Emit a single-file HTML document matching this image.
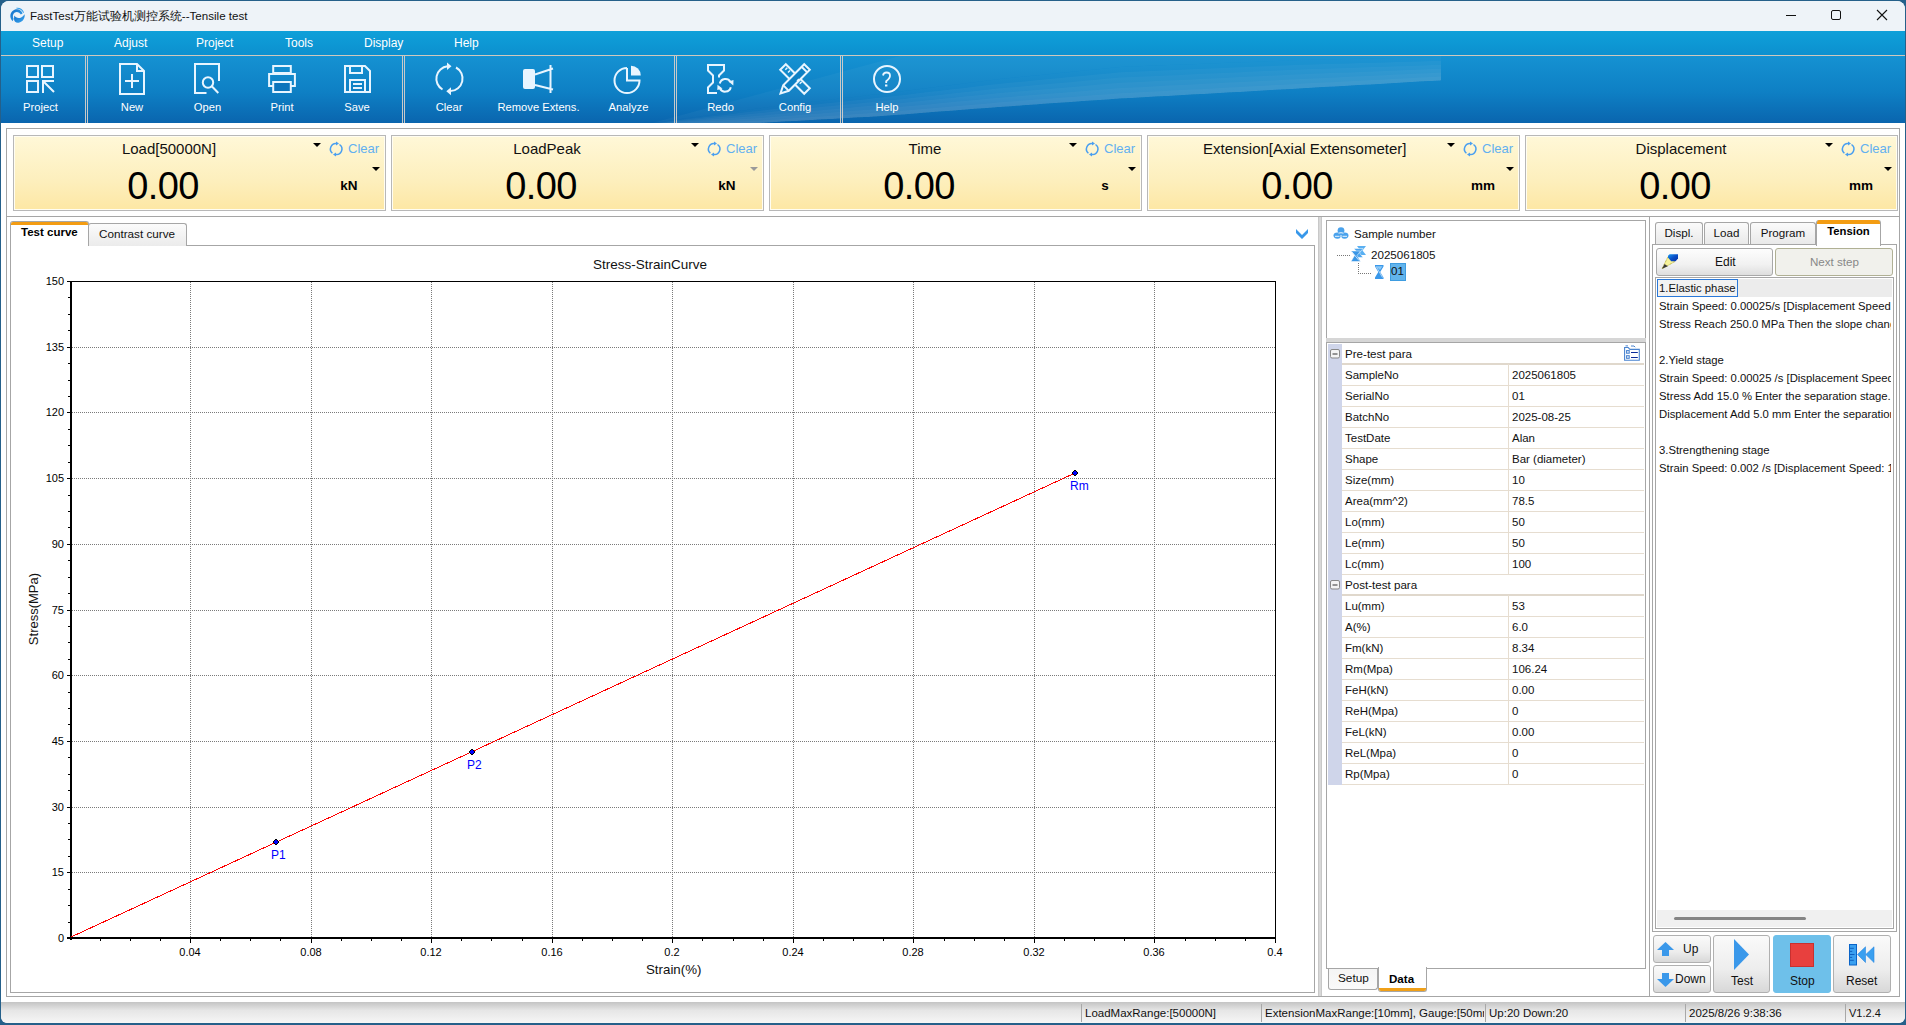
<!DOCTYPE html><html><head><meta charset="utf-8"><style>
*{margin:0;padding:0;box-sizing:border-box}
html,body{width:1906px;height:1025px;overflow:hidden;background:#fff;font-family:"Liberation Sans",sans-serif;color:#000}
.a{position:absolute}
.t{position:absolute;white-space:nowrap;line-height:1}
svg{position:absolute;overflow:visible}
</style></head><body>
<div class="a" style="left:0px;top:0px;width:1906px;height:1025px;background:#25608a"></div>
<div class="a" style="left:1px;top:1px;width:1904px;height:1022px;background:#fff;border-radius:8px 8px 7px 7px"></div>
<div class="a" style="left:1px;top:1px;width:1904px;height:30px;background:#eef3f8;border-radius:8px 8px 0 0"></div>
<svg style="left:8px;top:6px" width="18" height="18" viewBox="0 0 18 18">
<defs><linearGradient id="lg" x1="0" y1="0" x2="1" y2="1"><stop offset="0" stop-color="#1270c8"/><stop offset="1" stop-color="#3aa6f0"/></linearGradient></defs>
<path d="M4.6 15.2 C1.2 12 1.5 6 6.5 3.8 C10 2.4 13.5 4 14.6 7.6 L12.8 8.6 C11.5 6.2 9 5.3 6.8 6.5 C4.8 7.6 4.3 10.5 5.6 13 Z" fill="url(#lg)"/>
<path d="M6.3 9.6 C7.5 11.8 10.8 12.6 13.2 11.4 C14.8 10.6 15.8 9.4 16.6 8.3 C17.2 12 15 16 10.6 16.8 C8 17.2 6.2 15.8 6 13 Z" fill="url(#lg)"/>
<path d="M8.2 1.8 C11.8 1.2 15 3 16 6.5 L15.2 6.9 C14 4.2 11.5 2.8 8.5 2.6 Z" fill="#3aa0ea"/>
</svg>
<div class="t" style="left:30px;top:10px;font-size:11.6px;color:#111;font-weight:normal;">FastTest万能试验机测控系统--Tensile test</div>
<div class="a" style="left:1786px;top:15px;width:10px;height:1px;background:#111"></div>
<div class="a" style="left:1831px;top:10px;width:10px;height:10px;border:1px solid #111;border-radius:2px"></div>
<svg style="left:1877px;top:10px" width="10" height="10"><path d="M0 0L10 10M10 0L0 10" stroke="#111" stroke-width="1.1"/></svg>
<div class="a" style="left:1px;top:31px;width:1904px;height:24px;background:linear-gradient(#0fa0d9,#0c90cf)"></div>
<div class="a" style="left:1px;top:55px;width:1904px;height:1px;background:#cfc8bd"></div>
<div class="t" style="left:32px;top:37px;font-size:12px;color:#fff;font-weight:normal;">Setup</div>
<div class="t" style="left:114px;top:37px;font-size:12px;color:#fff;font-weight:normal;">Adjust</div>
<div class="t" style="left:196px;top:37px;font-size:12px;color:#fff;font-weight:normal;">Project</div>
<div class="t" style="left:285px;top:37px;font-size:12px;color:#fff;font-weight:normal;">Tools</div>
<div class="t" style="left:364px;top:37px;font-size:12px;color:#fff;font-weight:normal;">Display</div>
<div class="t" style="left:454px;top:37px;font-size:12px;color:#fff;font-weight:normal;">Help</div>
<div class="a" style="left:1px;top:56px;width:1904px;height:67px;background:linear-gradient(#1592d2,#0e7fc4 55%,#0a65ae)"></div>
<svg style="left:0;top:0" width="1906" height="130"><path d="M652 123 L652.0 123.0 L664.0 121.4 L676.0 119.7 L688.0 118.1 L700.0 116.4 L712.0 114.8 L724.0 113.1 L736.0 111.5 L748.0 109.8 L760.0 108.2 L772.0 106.5 L784.0 105.1 L796.0 103.7 L808.0 102.3 L820.0 100.9 L832.0 99.5 L844.0 98.1 L856.0 96.7 L868.0 95.3 L880.0 93.9 L892.0 92.5 L904.0 91.1 L916.0 89.6 L928.0 88.1 L940.0 86.6 L952.0 85.0 L964.0 83.5 L976.0 82.0 L988.0 80.5 L1000.0 79.0 L1012.0 77.8 L1024.0 76.6 L1036.0 75.4 L1048.0 74.2 L1060.0 73.0 L1072.0 71.8 L1084.0 70.6 L1096.0 69.4 L1108.0 68.2 L1120.0 67.0 L1132.0 66.5 L1144.0 66.1 L1156.0 65.6 L1168.0 65.1 L1180.0 64.7 L1192.0 64.2 L1204.0 63.7 L1216.0 63.3 L1228.0 62.8 L1240.0 62.3 L1252.0 61.9 L1264.0 61.4 L1276.0 60.9 L1288.0 60.5 L1300.0 60.0 L1312.0 59.7 L1324.0 59.5 L1336.0 59.2 L1348.0 59.0 L1360.0 58.7 L1372.0 58.5 L1384.0 58.2 L1396.0 58.0 L1408.0 57.7 L1420.0 57.4 L1432.0 57.2 L1441.0 57.0 L1441 56 L900 56 Z" fill="#fff" fill-opacity="0.035"/><path d="M652.0 124.7 L664.0 124.2 L676.0 123.8 L688.0 123.3 L700.0 122.8 L712.0 122.4 L724.0 121.9 L736.0 121.5 L748.0 121.0 L760.0 120.5 L772.0 119.7 L784.0 118.9 L796.0 118.1 L808.0 117.3 L820.0 116.5 L832.0 115.7 L844.0 114.9 L856.0 114.1 L868.0 113.3 L880.0 112.5 L892.0 111.5 L904.0 110.5 L916.0 109.5 L928.0 108.4 L940.0 107.4 L952.0 106.4 L964.0 105.4 L976.0 104.4 L988.0 103.4 L1000.0 102.3 L1012.0 101.4 L1024.0 100.5 L1036.0 99.6 L1048.0 98.7 L1060.0 97.8 L1072.0 96.9 L1084.0 96.0 L1096.0 95.1 L1108.0 94.2 L1120.0 93.3 L1132.0 92.7 L1144.0 92.1 L1156.0 91.4 L1168.0 90.8 L1180.0 90.1 L1192.0 89.5 L1204.0 88.9 L1216.0 88.2 L1228.0 87.6 L1240.0 86.9 L1252.0 86.3 L1264.0 85.7 L1276.0 85.0 L1288.0 84.4 L1300.0 83.8 L1312.0 83.1 L1324.0 82.5 L1336.0 81.9 L1348.0 81.3 L1360.0 80.7 L1372.0 80.0 L1384.0 79.4 L1396.0 78.8 L1408.0 78.2 L1420.0 77.6 L1432.0 77.0 L1441.0 76.5 L1441.0 80.4 L1432.0 80.9 L1420.0 81.6 L1408.0 82.3 L1396.0 83.0 L1384.0 83.7 L1372.0 84.4 L1360.0 85.1 L1348.0 85.7 L1336.0 86.4 L1324.0 87.1 L1312.0 87.8 L1300.0 88.5 L1288.0 89.2 L1276.0 89.8 L1264.0 90.5 L1252.0 91.2 L1240.0 91.9 L1228.0 92.5 L1216.0 93.2 L1204.0 93.9 L1192.0 94.6 L1180.0 95.2 L1168.0 95.9 L1156.0 96.6 L1144.0 97.3 L1132.0 97.9 L1120.0 98.6 L1108.0 99.4 L1096.0 100.3 L1084.0 101.1 L1072.0 102.0 L1060.0 102.8 L1048.0 103.6 L1036.0 104.5 L1024.0 105.3 L1012.0 106.2 L1000.0 107.0 L988.0 107.9 L976.0 108.8 L964.0 109.8 L952.0 110.7 L940.0 111.6 L928.0 112.5 L916.0 113.4 L904.0 114.4 L892.0 115.3 L880.0 116.2 L868.0 116.9 L856.0 117.6 L844.0 118.2 L832.0 118.9 L820.0 119.6 L808.0 120.3 L796.0 121.0 L784.0 121.6 L772.0 122.3 L760.0 123.0 L748.0 123.0 L736.0 123.0 L724.0 123.0 L712.0 123.0 L700.0 123.0 L688.0 123.0 L676.0 123.0 L664.0 123.0 L652.0 123.0 Z" fill="#fff" fill-opacity="0.036"/><path d="M652.0 124.4 L664.0 123.7 L676.0 123.0 L688.0 122.3 L700.0 121.6 L712.0 120.9 L724.0 120.2 L736.0 119.5 L748.0 118.8 L760.0 118.1 L772.0 117.1 L784.0 116.1 L796.0 115.2 L808.0 114.3 L820.0 113.4 L832.0 112.4 L844.0 111.5 L856.0 110.6 L868.0 109.7 L880.0 108.8 L892.0 107.7 L904.0 106.6 L916.0 105.5 L928.0 104.4 L940.0 103.3 L952.0 102.1 L964.0 101.0 L976.0 99.9 L988.0 98.8 L1000.0 97.7 L1012.0 96.7 L1024.0 95.7 L1036.0 94.8 L1048.0 93.8 L1060.0 92.9 L1072.0 91.9 L1084.0 90.9 L1096.0 90.0 L1108.0 89.0 L1120.0 88.1 L1132.0 87.5 L1144.0 86.9 L1156.0 86.3 L1168.0 85.6 L1180.0 85.0 L1192.0 84.4 L1204.0 83.8 L1216.0 83.2 L1228.0 82.6 L1240.0 82.0 L1252.0 81.4 L1264.0 80.8 L1276.0 80.2 L1288.0 79.6 L1300.0 79.0 L1312.0 78.5 L1324.0 77.9 L1336.0 77.4 L1348.0 76.8 L1360.0 76.3 L1372.0 75.7 L1384.0 75.2 L1396.0 74.6 L1408.0 74.1 L1420.0 73.6 L1432.0 73.0 L1441.0 72.6 L1441.0 80.4 L1432.0 80.9 L1420.0 81.6 L1408.0 82.3 L1396.0 83.0 L1384.0 83.7 L1372.0 84.4 L1360.0 85.1 L1348.0 85.7 L1336.0 86.4 L1324.0 87.1 L1312.0 87.8 L1300.0 88.5 L1288.0 89.2 L1276.0 89.8 L1264.0 90.5 L1252.0 91.2 L1240.0 91.9 L1228.0 92.5 L1216.0 93.2 L1204.0 93.9 L1192.0 94.6 L1180.0 95.2 L1168.0 95.9 L1156.0 96.6 L1144.0 97.3 L1132.0 97.9 L1120.0 98.6 L1108.0 99.4 L1096.0 100.3 L1084.0 101.1 L1072.0 102.0 L1060.0 102.8 L1048.0 103.6 L1036.0 104.5 L1024.0 105.3 L1012.0 106.2 L1000.0 107.0 L988.0 107.9 L976.0 108.8 L964.0 109.8 L952.0 110.7 L940.0 111.6 L928.0 112.5 L916.0 113.4 L904.0 114.4 L892.0 115.3 L880.0 116.2 L868.0 116.9 L856.0 117.6 L844.0 118.2 L832.0 118.9 L820.0 119.6 L808.0 120.3 L796.0 121.0 L784.0 121.6 L772.0 122.3 L760.0 123.0 L748.0 123.0 L736.0 123.0 L724.0 123.0 L712.0 123.0 L700.0 123.0 L688.0 123.0 L676.0 123.0 L664.0 123.0 L652.0 123.0 Z" fill="#fff" fill-opacity="0.036"/><path d="M652.0 124.0 L664.0 123.1 L676.0 122.1 L688.0 121.2 L700.0 120.3 L712.0 119.3 L724.0 118.4 L736.0 117.5 L748.0 116.5 L760.0 115.6 L772.0 114.4 L784.0 113.4 L796.0 112.3 L808.0 111.3 L820.0 110.2 L832.0 109.2 L844.0 108.2 L856.0 107.1 L868.0 106.1 L880.0 105.1 L892.0 103.9 L904.0 102.7 L916.0 101.5 L928.0 100.3 L940.0 99.1 L952.0 97.9 L964.0 96.6 L976.0 95.4 L988.0 94.2 L1000.0 93.0 L1012.0 92.0 L1024.0 91.0 L1036.0 89.9 L1048.0 88.9 L1060.0 87.9 L1072.0 86.9 L1084.0 85.9 L1096.0 84.8 L1108.0 83.8 L1120.0 82.8 L1132.0 82.2 L1144.0 81.7 L1156.0 81.1 L1168.0 80.5 L1180.0 80.0 L1192.0 79.4 L1204.0 78.8 L1216.0 78.2 L1228.0 77.7 L1240.0 77.1 L1252.0 76.5 L1264.0 76.0 L1276.0 75.4 L1288.0 74.8 L1300.0 74.2 L1312.0 73.8 L1324.0 73.3 L1336.0 72.8 L1348.0 72.4 L1360.0 71.9 L1372.0 71.4 L1384.0 70.9 L1396.0 70.5 L1408.0 70.0 L1420.0 69.5 L1432.0 69.1 L1441.0 68.7 L1441.0 80.4 L1432.0 80.9 L1420.0 81.6 L1408.0 82.3 L1396.0 83.0 L1384.0 83.7 L1372.0 84.4 L1360.0 85.1 L1348.0 85.7 L1336.0 86.4 L1324.0 87.1 L1312.0 87.8 L1300.0 88.5 L1288.0 89.2 L1276.0 89.8 L1264.0 90.5 L1252.0 91.2 L1240.0 91.9 L1228.0 92.5 L1216.0 93.2 L1204.0 93.9 L1192.0 94.6 L1180.0 95.2 L1168.0 95.9 L1156.0 96.6 L1144.0 97.3 L1132.0 97.9 L1120.0 98.6 L1108.0 99.4 L1096.0 100.3 L1084.0 101.1 L1072.0 102.0 L1060.0 102.8 L1048.0 103.6 L1036.0 104.5 L1024.0 105.3 L1012.0 106.2 L1000.0 107.0 L988.0 107.9 L976.0 108.8 L964.0 109.8 L952.0 110.7 L940.0 111.6 L928.0 112.5 L916.0 113.4 L904.0 114.4 L892.0 115.3 L880.0 116.2 L868.0 116.9 L856.0 117.6 L844.0 118.2 L832.0 118.9 L820.0 119.6 L808.0 120.3 L796.0 121.0 L784.0 121.6 L772.0 122.3 L760.0 123.0 L748.0 123.0 L736.0 123.0 L724.0 123.0 L712.0 123.0 L700.0 123.0 L688.0 123.0 L676.0 123.0 L664.0 123.0 L652.0 123.0 Z" fill="#fff" fill-opacity="0.036"/><path d="M652.0 123.7 L664.0 122.5 L676.0 121.3 L688.0 120.2 L700.0 119.0 L712.0 117.8 L724.0 116.6 L736.0 115.5 L748.0 114.3 L760.0 113.1 L772.0 111.8 L784.0 110.6 L796.0 109.4 L808.0 108.3 L820.0 107.1 L832.0 106.0 L844.0 104.8 L856.0 103.7 L868.0 102.5 L880.0 101.3 L892.0 100.1 L904.0 98.9 L916.0 97.5 L928.0 96.2 L940.0 94.9 L952.0 93.6 L964.0 92.3 L976.0 91.0 L988.0 89.6 L1000.0 88.3 L1012.0 87.3 L1024.0 86.2 L1036.0 85.1 L1048.0 84.0 L1060.0 82.9 L1072.0 81.9 L1084.0 80.8 L1096.0 79.7 L1108.0 78.6 L1120.0 77.5 L1132.0 77.0 L1144.0 76.5 L1156.0 75.9 L1168.0 75.4 L1180.0 74.9 L1192.0 74.3 L1204.0 73.8 L1216.0 73.2 L1228.0 72.7 L1240.0 72.2 L1252.0 71.6 L1264.0 71.1 L1276.0 70.6 L1288.0 70.0 L1300.0 69.5 L1312.0 69.1 L1324.0 68.7 L1336.0 68.3 L1348.0 67.9 L1360.0 67.5 L1372.0 67.1 L1384.0 66.7 L1396.0 66.3 L1408.0 65.9 L1420.0 65.5 L1432.0 65.1 L1441.0 64.8 L1441.0 80.4 L1432.0 80.9 L1420.0 81.6 L1408.0 82.3 L1396.0 83.0 L1384.0 83.7 L1372.0 84.4 L1360.0 85.1 L1348.0 85.7 L1336.0 86.4 L1324.0 87.1 L1312.0 87.8 L1300.0 88.5 L1288.0 89.2 L1276.0 89.8 L1264.0 90.5 L1252.0 91.2 L1240.0 91.9 L1228.0 92.5 L1216.0 93.2 L1204.0 93.9 L1192.0 94.6 L1180.0 95.2 L1168.0 95.9 L1156.0 96.6 L1144.0 97.3 L1132.0 97.9 L1120.0 98.6 L1108.0 99.4 L1096.0 100.3 L1084.0 101.1 L1072.0 102.0 L1060.0 102.8 L1048.0 103.6 L1036.0 104.5 L1024.0 105.3 L1012.0 106.2 L1000.0 107.0 L988.0 107.9 L976.0 108.8 L964.0 109.8 L952.0 110.7 L940.0 111.6 L928.0 112.5 L916.0 113.4 L904.0 114.4 L892.0 115.3 L880.0 116.2 L868.0 116.9 L856.0 117.6 L844.0 118.2 L832.0 118.9 L820.0 119.6 L808.0 120.3 L796.0 121.0 L784.0 121.6 L772.0 122.3 L760.0 123.0 L748.0 123.0 L736.0 123.0 L724.0 123.0 L712.0 123.0 L700.0 123.0 L688.0 123.0 L676.0 123.0 L664.0 123.0 L652.0 123.0 Z" fill="#fff" fill-opacity="0.036"/><path d="M652.0 123.3 L664.0 121.9 L676.0 120.5 L688.0 119.1 L700.0 117.7 L712.0 116.3 L724.0 114.9 L736.0 113.5 L748.0 112.1 L760.0 110.7 L772.0 109.2 L784.0 107.8 L796.0 106.6 L808.0 105.3 L820.0 104.0 L832.0 102.7 L844.0 101.5 L856.0 100.2 L868.0 98.9 L880.0 97.6 L892.0 96.3 L904.0 95.0 L916.0 93.6 L928.0 92.1 L940.0 90.7 L952.0 89.3 L964.0 87.9 L976.0 86.5 L988.0 85.1 L1000.0 83.7 L1012.0 82.5 L1024.0 81.4 L1036.0 80.2 L1048.0 79.1 L1060.0 78.0 L1072.0 76.8 L1084.0 75.7 L1096.0 74.5 L1108.0 73.4 L1120.0 72.3 L1132.0 71.8 L1144.0 71.3 L1156.0 70.8 L1168.0 70.3 L1180.0 69.8 L1192.0 69.3 L1204.0 68.8 L1216.0 68.3 L1228.0 67.8 L1240.0 67.3 L1252.0 66.8 L1264.0 66.3 L1276.0 65.8 L1288.0 65.3 L1300.0 64.8 L1312.0 64.4 L1324.0 64.1 L1336.0 63.8 L1348.0 63.4 L1360.0 63.1 L1372.0 62.8 L1384.0 62.5 L1396.0 62.1 L1408.0 61.8 L1420.0 61.5 L1432.0 61.1 L1441.0 60.9 L1441.0 80.4 L1432.0 80.9 L1420.0 81.6 L1408.0 82.3 L1396.0 83.0 L1384.0 83.7 L1372.0 84.4 L1360.0 85.1 L1348.0 85.7 L1336.0 86.4 L1324.0 87.1 L1312.0 87.8 L1300.0 88.5 L1288.0 89.2 L1276.0 89.8 L1264.0 90.5 L1252.0 91.2 L1240.0 91.9 L1228.0 92.5 L1216.0 93.2 L1204.0 93.9 L1192.0 94.6 L1180.0 95.2 L1168.0 95.9 L1156.0 96.6 L1144.0 97.3 L1132.0 97.9 L1120.0 98.6 L1108.0 99.4 L1096.0 100.3 L1084.0 101.1 L1072.0 102.0 L1060.0 102.8 L1048.0 103.6 L1036.0 104.5 L1024.0 105.3 L1012.0 106.2 L1000.0 107.0 L988.0 107.9 L976.0 108.8 L964.0 109.8 L952.0 110.7 L940.0 111.6 L928.0 112.5 L916.0 113.4 L904.0 114.4 L892.0 115.3 L880.0 116.2 L868.0 116.9 L856.0 117.6 L844.0 118.2 L832.0 118.9 L820.0 119.6 L808.0 120.3 L796.0 121.0 L784.0 121.6 L772.0 122.3 L760.0 123.0 L748.0 123.0 L736.0 123.0 L724.0 123.0 L712.0 123.0 L700.0 123.0 L688.0 123.0 L676.0 123.0 L664.0 123.0 L652.0 123.0 Z" fill="#fff" fill-opacity="0.036"/><path d="M652.0 123.0 L664.0 121.4 L676.0 119.7 L688.0 118.1 L700.0 116.4 L712.0 114.8 L724.0 113.1 L736.0 111.5 L748.0 109.8 L760.0 108.2 L772.0 106.5 L784.0 105.1 L796.0 103.7 L808.0 102.3 L820.0 100.9 L832.0 99.5 L844.0 98.1 L856.0 96.7 L868.0 95.3 L880.0 93.9 L892.0 92.5 L904.0 91.1 L916.0 89.6 L928.0 88.1 L940.0 86.6 L952.0 85.0 L964.0 83.5 L976.0 82.0 L988.0 80.5 L1000.0 79.0 L1012.0 77.8 L1024.0 76.6 L1036.0 75.4 L1048.0 74.2 L1060.0 73.0 L1072.0 71.8 L1084.0 70.6 L1096.0 69.4 L1108.0 68.2 L1120.0 67.0 L1132.0 66.5 L1144.0 66.1 L1156.0 65.6 L1168.0 65.1 L1180.0 64.7 L1192.0 64.2 L1204.0 63.7 L1216.0 63.3 L1228.0 62.8 L1240.0 62.3 L1252.0 61.9 L1264.0 61.4 L1276.0 60.9 L1288.0 60.5 L1300.0 60.0 L1312.0 59.7 L1324.0 59.5 L1336.0 59.2 L1348.0 59.0 L1360.0 58.7 L1372.0 58.5 L1384.0 58.2 L1396.0 58.0 L1408.0 57.7 L1420.0 57.4 L1432.0 57.2 L1441.0 57.0 L1441.0 80.4 L1432.0 80.9 L1420.0 81.6 L1408.0 82.3 L1396.0 83.0 L1384.0 83.7 L1372.0 84.4 L1360.0 85.1 L1348.0 85.7 L1336.0 86.4 L1324.0 87.1 L1312.0 87.8 L1300.0 88.5 L1288.0 89.2 L1276.0 89.8 L1264.0 90.5 L1252.0 91.2 L1240.0 91.9 L1228.0 92.5 L1216.0 93.2 L1204.0 93.9 L1192.0 94.6 L1180.0 95.2 L1168.0 95.9 L1156.0 96.6 L1144.0 97.3 L1132.0 97.9 L1120.0 98.6 L1108.0 99.4 L1096.0 100.3 L1084.0 101.1 L1072.0 102.0 L1060.0 102.8 L1048.0 103.6 L1036.0 104.5 L1024.0 105.3 L1012.0 106.2 L1000.0 107.0 L988.0 107.9 L976.0 108.8 L964.0 109.8 L952.0 110.7 L940.0 111.6 L928.0 112.5 L916.0 113.4 L904.0 114.4 L892.0 115.3 L880.0 116.2 L868.0 116.9 L856.0 117.6 L844.0 118.2 L832.0 118.9 L820.0 119.6 L808.0 120.3 L796.0 121.0 L784.0 121.6 L772.0 122.3 L760.0 123.0 L748.0 123.0 L736.0 123.0 L724.0 123.0 L712.0 123.0 L700.0 123.0 L688.0 123.0 L676.0 123.0 L664.0 123.0 L652.0 123.0 Z" fill="#fff" fill-opacity="0.036"/></svg>
<div class="a" style="left:85px;top:56px;width:3px;height:67px;border-left:1px solid #c9c9c9;border-right:1px solid #c9c9c9"></div>
<div class="a" style="left:402px;top:56px;width:3px;height:67px;border-left:1px solid #c9c9c9;border-right:1px solid #c9c9c9"></div>
<div class="a" style="left:674px;top:56px;width:3px;height:67px;border-left:1px solid #c9c9c9;border-right:1px solid #c9c9c9"></div>
<div class="a" style="left:840px;top:56px;width:3px;height:67px;border-left:1px solid #c9c9c9;border-right:1px solid #c9c9c9"></div>
<svg style="left:0;top:0" width="1906" height="130" fill="none" stroke="#e8f5ff" stroke-width="2">
<!-- project -->
<rect x="27" y="66" width="11" height="11"/><rect x="42" y="66" width="11" height="11"/>
<rect x="27" y="81" width="11" height="11"/><path d="M43 93 V81 H54 M44 82 L54 92"/>
<!-- new -->
<path d="M120 64 H137 L144 71 V94 H120 Z M137 64 V71 H144"/><path d="M125 81 H139 M132 74 V88"/>
<!-- open -->
<path d="M206.5 93 H195 V64 H219 V81"/><circle cx="208" cy="82.5" r="5.2"/><path d="M211.8 86.3 L218.3 93"/>
<!-- print -->
<rect x="273.2" y="66" width="17.6" height="7"/><rect x="269.1" y="74" width="25.8" height="12"/><rect x="273.2" y="82" width="17.6" height="10" fill="#0c74bc"/>
<!-- save -->
<path d="M345 66 H365 L370 71 V92 H345 Z"/><path d="M350 66 V73 H362 V66"/><rect x="350" y="80" width="15" height="12"/><path d="M353 84 H362 M353 88 H362"/>
<!-- clear -->
<path d="M442.5 89.5 A12.5 12.5 0 0 1 447.5 66.3"/><path d="M456 67.5 A12.5 12.5 0 0 1 450.5 91"/>
<path d="M447 62.5 L451.5 66.3 L447 70 Z" fill="#e8f5ff" stroke="none"/><path d="M451 87.3 L446.3 91.2 L451 95.3 Z" fill="#e8f5ff" stroke="none"/>
<!-- remove extens -->
<rect x="523" y="69" width="12" height="20" rx="2" fill="#e8f5ff" stroke="none"/><path d="M535 74.5 L553 68.5 M535 85 L553 89.5 M550.5 65 V93"/>
<!-- analyze -->
<path d="M627 68 V80.5 H639.5 A12.5 12.5 0 1 1 627 68"/><path d="M631 65.75 A9.75 9.75 0 0 1 640.75 75.5 H631 Z" fill="#e8f5ff" stroke="none"/>
<!-- redo -->
<path d="M717 93 H708 V87.5 L713 82.5 V75.5 L708 70.5 V65 H724 V70.5 L719 75.5 V77.5"/>
<path d="M719.8 83.5 A5.8 5.8 0 0 1 730.5 82" /><path d="M730.8 87.2 A5.8 5.8 0 0 1 720 88.5"/>
<path d="M728.5 81.5 L733.5 80 L733.3 85.5 Z" fill="#e8f5ff" stroke="none"/><path d="M722.5 88.5 L717.3 90 L717.5 84.8 Z" fill="#e8f5ff" stroke="none"/>
<!-- config -->
<path d="M785.8 64.2 L780.2 69.8 L804.2 93.8 L809.8 88.2 Z"/>
<path d="M809.8 69.8 L804.2 64.2 L783.2 85.2 L780.5 93.5 L788.8 90.8 Z" fill="#0d80c4"/>
<path d="M783.4 85.4 L788.6 90.6 M801.6 66.8 L807.2 72.4"/>
<path d="M787.3 67.8 L785.3 69.8 M790 70.5 L788 72.5 M797 81 L799 79 M799.7 83.7 L801.7 81.7" stroke-width="1.5"/>
<!-- help -->
<circle cx="887" cy="79" r="13"/><path d="M883 75.5 Q883.5 72.5 886.5 72.5 Q890 72.5 890 75.8 Q890 78.2 886.2 81.2 V83" stroke-width="1.8"/><rect x="885" y="84.5" width="2.4" height="2" fill="#e8f5ff" stroke="none"/>
</svg>
<div class="t" style="left:-19.5px;width:120px;text-align:center;top:102px;font-size:11.2px;color:#fff">Project</div>
<div class="t" style="left:72px;width:120px;text-align:center;top:102px;font-size:11.2px;color:#fff">New</div>
<div class="t" style="left:147.5px;width:120px;text-align:center;top:102px;font-size:11.2px;color:#fff">Open</div>
<div class="t" style="left:222px;width:120px;text-align:center;top:102px;font-size:11.2px;color:#fff">Print</div>
<div class="t" style="left:297px;width:120px;text-align:center;top:102px;font-size:11.2px;color:#fff">Save</div>
<div class="t" style="left:389px;width:120px;text-align:center;top:102px;font-size:11.2px;color:#fff">Clear</div>
<div class="t" style="left:478.5px;width:120px;text-align:center;top:102px;font-size:11.2px;color:#fff">Remove Extens.</div>
<div class="t" style="left:568.5px;width:120px;text-align:center;top:102px;font-size:11.2px;color:#fff">Analyze</div>
<div class="t" style="left:660.5px;width:120px;text-align:center;top:102px;font-size:11.2px;color:#fff">Redo</div>
<div class="t" style="left:735px;width:120px;text-align:center;top:102px;font-size:11.2px;color:#fff">Config</div>
<div class="t" style="left:827px;width:120px;text-align:center;top:102px;font-size:11.2px;color:#fff">Help</div>
<div class="a" style="left:6px;top:128px;width:1894px;height:869px;border:1px solid #a6a6a6;border-bottom:1px solid #a6a6a6"></div>
<div class="a" style="left:6px;top:216px;width:1894px;height:1px;background:#a6a6a6"></div>
<div class="a" style="left:13px;top:135px;width:373px;height:76px;border:1px solid #b8b8b8;box-shadow:inset 0 0 0 1px #fffdf2;background:linear-gradient(#fff8d8,#fdefbd 60%,#fde7a4)"></div>
<div class="t" style="left:69px;width:200px;text-align:center;top:141px;font-size:15px;color:#111">Load[50000N]</div>
<div class="t" style="left:103px;width:120px;text-align:center;top:167px;font-size:38px;letter-spacing:-0.6px;color:#000">0.00</div>
<div class="t" style="left:319px;width:60px;text-align:center;top:179px;font-size:13.5px;font-weight:bold;color:#000">kN</div>
<svg style="left:313px;top:143px" width="8" height="5"><path d="M0 0H8L4 4Z" fill="#000"/></svg>
<svg style="left:372px;top:167px" width="8" height="5"><path d="M0 0H8L4 4Z" fill="#000"/></svg>
<svg style="left:328px;top:140px" width="16" height="18" fill="none" stroke="#4a9ff0" stroke-width="1.5">
<path d="M4.4 13.2 A5.5 5.5 0 0 1 8.3 3.5"/><path d="M11.5 4.5 A5.5 5.5 0 0 1 7.7 14.5"/>
<path d="M8 1.6 L11 3.5 L8 5.4 Z" fill="#4a9ff0" stroke="none"/><path d="M8 12.6 L5 14.5 L8 16.4 Z" fill="#4a9ff0" stroke="none"/></svg>
<div class="t" style="left:348px;top:142px;font-size:13px;color:#62b0f0;font-weight:normal;">Clear</div>
<div class="a" style="left:391px;top:135px;width:373px;height:76px;border:1px solid #b8b8b8;box-shadow:inset 0 0 0 1px #fffdf2;background:linear-gradient(#fff8d8,#fdefbd 60%,#fde7a4)"></div>
<div class="t" style="left:447px;width:200px;text-align:center;top:141px;font-size:15px;color:#111">LoadPeak</div>
<div class="t" style="left:481px;width:120px;text-align:center;top:167px;font-size:38px;letter-spacing:-0.6px;color:#000">0.00</div>
<div class="t" style="left:697px;width:60px;text-align:center;top:179px;font-size:13.5px;font-weight:bold;color:#000">kN</div>
<svg style="left:691px;top:143px" width="8" height="5"><path d="M0 0H8L4 4Z" fill="#000"/></svg>
<svg style="left:750px;top:167px" width="8" height="5"><path d="M0 0H8L4 4Z" fill="#9a9a9a"/></svg>
<svg style="left:706px;top:140px" width="16" height="18" fill="none" stroke="#4a9ff0" stroke-width="1.5">
<path d="M4.4 13.2 A5.5 5.5 0 0 1 8.3 3.5"/><path d="M11.5 4.5 A5.5 5.5 0 0 1 7.7 14.5"/>
<path d="M8 1.6 L11 3.5 L8 5.4 Z" fill="#4a9ff0" stroke="none"/><path d="M8 12.6 L5 14.5 L8 16.4 Z" fill="#4a9ff0" stroke="none"/></svg>
<div class="t" style="left:726px;top:142px;font-size:13px;color:#62b0f0;font-weight:normal;">Clear</div>
<div class="a" style="left:769px;top:135px;width:373px;height:76px;border:1px solid #b8b8b8;box-shadow:inset 0 0 0 1px #fffdf2;background:linear-gradient(#fff8d8,#fdefbd 60%,#fde7a4)"></div>
<div class="t" style="left:825px;width:200px;text-align:center;top:141px;font-size:15px;color:#111">Time</div>
<div class="t" style="left:859px;width:120px;text-align:center;top:167px;font-size:38px;letter-spacing:-0.6px;color:#000">0.00</div>
<div class="t" style="left:1075px;width:60px;text-align:center;top:179px;font-size:13.5px;font-weight:bold;color:#000">s</div>
<svg style="left:1069px;top:143px" width="8" height="5"><path d="M0 0H8L4 4Z" fill="#000"/></svg>
<svg style="left:1128px;top:167px" width="8" height="5"><path d="M0 0H8L4 4Z" fill="#000"/></svg>
<svg style="left:1084px;top:140px" width="16" height="18" fill="none" stroke="#4a9ff0" stroke-width="1.5">
<path d="M4.4 13.2 A5.5 5.5 0 0 1 8.3 3.5"/><path d="M11.5 4.5 A5.5 5.5 0 0 1 7.7 14.5"/>
<path d="M8 1.6 L11 3.5 L8 5.4 Z" fill="#4a9ff0" stroke="none"/><path d="M8 12.6 L5 14.5 L8 16.4 Z" fill="#4a9ff0" stroke="none"/></svg>
<div class="t" style="left:1104px;top:142px;font-size:13px;color:#62b0f0;font-weight:normal;">Clear</div>
<div class="a" style="left:1147px;top:135px;width:373px;height:76px;border:1px solid #b8b8b8;box-shadow:inset 0 0 0 1px #fffdf2;background:linear-gradient(#fff8d8,#fdefbd 60%,#fde7a4)"></div>
<div class="t" style="left:1203px;width:200px;text-align:center;top:141px;font-size:15px;color:#111">Extension[Axial Extensometer]</div>
<div class="t" style="left:1237px;width:120px;text-align:center;top:167px;font-size:38px;letter-spacing:-0.6px;color:#000">0.00</div>
<div class="t" style="left:1453px;width:60px;text-align:center;top:179px;font-size:13.5px;font-weight:bold;color:#000">mm</div>
<svg style="left:1447px;top:143px" width="8" height="5"><path d="M0 0H8L4 4Z" fill="#000"/></svg>
<svg style="left:1506px;top:167px" width="8" height="5"><path d="M0 0H8L4 4Z" fill="#000"/></svg>
<svg style="left:1462px;top:140px" width="16" height="18" fill="none" stroke="#4a9ff0" stroke-width="1.5">
<path d="M4.4 13.2 A5.5 5.5 0 0 1 8.3 3.5"/><path d="M11.5 4.5 A5.5 5.5 0 0 1 7.7 14.5"/>
<path d="M8 1.6 L11 3.5 L8 5.4 Z" fill="#4a9ff0" stroke="none"/><path d="M8 12.6 L5 14.5 L8 16.4 Z" fill="#4a9ff0" stroke="none"/></svg>
<div class="t" style="left:1482px;top:142px;font-size:13px;color:#62b0f0;font-weight:normal;">Clear</div>
<div class="a" style="left:1525px;top:135px;width:373px;height:76px;border:1px solid #b8b8b8;box-shadow:inset 0 0 0 1px #fffdf2;background:linear-gradient(#fff8d8,#fdefbd 60%,#fde7a4)"></div>
<div class="t" style="left:1581px;width:200px;text-align:center;top:141px;font-size:15px;color:#111">Displacement</div>
<div class="t" style="left:1615px;width:120px;text-align:center;top:167px;font-size:38px;letter-spacing:-0.6px;color:#000">0.00</div>
<div class="t" style="left:1831px;width:60px;text-align:center;top:179px;font-size:13.5px;font-weight:bold;color:#000">mm</div>
<svg style="left:1825px;top:143px" width="8" height="5"><path d="M0 0H8L4 4Z" fill="#000"/></svg>
<svg style="left:1884px;top:167px" width="8" height="5"><path d="M0 0H8L4 4Z" fill="#000"/></svg>
<svg style="left:1840px;top:140px" width="16" height="18" fill="none" stroke="#4a9ff0" stroke-width="1.5">
<path d="M4.4 13.2 A5.5 5.5 0 0 1 8.3 3.5"/><path d="M11.5 4.5 A5.5 5.5 0 0 1 7.7 14.5"/>
<path d="M8 1.6 L11 3.5 L8 5.4 Z" fill="#4a9ff0" stroke="none"/><path d="M8 12.6 L5 14.5 L8 16.4 Z" fill="#4a9ff0" stroke="none"/></svg>
<div class="t" style="left:1860px;top:142px;font-size:13px;color:#62b0f0;font-weight:normal;">Clear</div>
<div class="a" style="left:10px;top:245px;width:1305px;height:748px;border:1px solid #a6a6a6;background:#fff"></div>
<div class="a" style="left:88px;top:223px;width:99px;height:23px;border:1px solid #a6a6a6;border-bottom:none;border-radius:3px 3px 0 0;background:linear-gradient(#fbfbfb,#ebebeb)"></div>
<div class="t" style="left:99px;top:228px;font-size:11.7px;color:#111;font-weight:normal;">Contrast curve</div>
<div class="a" style="left:10px;top:221px;width:79px;height:25px;border:1px solid #a6a6a6;border-bottom:none;border-radius:3px 3px 0 0;background:#fff"></div>
<div class="a" style="left:11px;top:222px;width:77px;height:3px;background:#f39c12;border-radius:2px 2px 0 0"></div>
<div class="t" style="left:21px;top:227px;font-size:11.5px;color:#000;font-weight:bold;">Test curve</div>
<svg style="left:1295px;top:228px" width="14" height="12"><path d="M1 1 L7 7 L13 1 V5 L7 11 L1 5 Z" fill="#3898ea"/></svg>
<svg style="left:0;top:0" width="1906" height="1025" shape-rendering="crispEdges">
<path d="M190.5 282 V937 M311.5 282 V937 M431.5 282 V937 M552.5 282 V937 M672.5 282 V937 M793.5 282 V937 M913.5 282 V937 M1034.5 282 V937 M1154.5 282 V937 M72 872.5 H1275 M72 807.5 H1275 M72 741.5 H1275 M72 675.5 H1275 M72 610.5 H1275 M72 544.5 H1275 M72 478.5 H1275 M72 412.5 H1275 M72 347.5 H1275" stroke="#7a7a7a" stroke-width="1" stroke-dasharray="1 1" fill="none"/>
<path d="M70 281.5 H1275.5 V937" stroke="#000" stroke-width="1" fill="none"/>
<rect x="70" y="281" width="2" height="659" fill="#000"/>
<rect x="67" y="937" width="1209" height="2" fill="#000"/>
<path d="M67 938.5 H70 M68 922.5 H70 M68 905.5 H70 M68 889.5 H70 M67 872.5 H70 M68 856.5 H70 M68 839.5 H70 M68 823.5 H70 M67 807.5 H70 M68 790.5 H70 M68 774.5 H70 M68 757.5 H70 M67 741.5 H70 M68 724.5 H70 M68 708.5 H70 M68 692.5 H70 M67 675.5 H70 M68 659.5 H70 M68 642.5 H70 M68 626.5 H70 M67 610.5 H70 M68 593.5 H70 M68 577.5 H70 M68 560.5 H70 M67 544.5 H70 M68 527.5 H70 M68 511.5 H70 M68 495.5 H70 M67 478.5 H70 M68 462.5 H70 M68 445.5 H70 M68 429.5 H70 M67 412.5 H70 M68 396.5 H70 M68 380.5 H70 M68 363.5 H70 M67 347.5 H70 M68 330.5 H70 M68 314.5 H70 M68 297.5 H70 M67 281.5 H70 M100.5 939 V941 M130.5 939 V941 M160.5 939 V941 M190.5 939 V943 M220.5 939 V941 M250.5 939 V941 M280.5 939 V941 M311.5 939 V943 M341.5 939 V941 M371.5 939 V941 M401.5 939 V941 M431.5 939 V943 M461.5 939 V941 M491.5 939 V941 M522.5 939 V941 M552.5 939 V943 M582.5 939 V941 M612.5 939 V941 M642.5 939 V941 M672.5 939 V943 M702.5 939 V941 M733.5 939 V941 M763.5 939 V941 M793.5 939 V943 M823.5 939 V941 M853.5 939 V941 M883.5 939 V941 M913.5 939 V943 M944.5 939 V941 M974.5 939 V941 M1004.5 939 V941 M1034.5 939 V943 M1064.5 939 V941 M1094.5 939 V941 M1124.5 939 V941 M1154.5 939 V943 M1185.5 939 V941 M1215.5 939 V941 M1245.5 939 V941 M1275.5 939 V943" stroke="#000" stroke-width="1" fill="none"/>
<path d="M71 937 L1075 473" stroke="#ff0000" stroke-width="1" fill="none"/>
<path d="M276 839 L279 842 L276 845 L273 842 Z" fill="#0000ff" stroke="#000" stroke-width="1" shape-rendering="auto"/>
<path d="M472 749 L475 752 L472 755 L469 752 Z" fill="#0000ff" stroke="#000" stroke-width="1" shape-rendering="auto"/>
<path d="M1075 470 L1078 473 L1075 476 L1072 473 Z" fill="#0000ff" stroke="#000" stroke-width="1" shape-rendering="auto"/>
</svg>
<div class="t" style="left:24px;width:40px;text-align:right;top:933px;font-size:11px;color:#000">0</div>
<div class="t" style="left:24px;width:40px;text-align:right;top:867px;font-size:11px;color:#000">15</div>
<div class="t" style="left:24px;width:40px;text-align:right;top:802px;font-size:11px;color:#000">30</div>
<div class="t" style="left:24px;width:40px;text-align:right;top:736px;font-size:11px;color:#000">45</div>
<div class="t" style="left:24px;width:40px;text-align:right;top:670px;font-size:11px;color:#000">60</div>
<div class="t" style="left:24px;width:40px;text-align:right;top:605px;font-size:11px;color:#000">75</div>
<div class="t" style="left:24px;width:40px;text-align:right;top:539px;font-size:11px;color:#000">90</div>
<div class="t" style="left:24px;width:40px;text-align:right;top:473px;font-size:11px;color:#000">105</div>
<div class="t" style="left:24px;width:40px;text-align:right;top:407px;font-size:11px;color:#000">120</div>
<div class="t" style="left:24px;width:40px;text-align:right;top:342px;font-size:11px;color:#000">135</div>
<div class="t" style="left:24px;width:40px;text-align:right;top:276px;font-size:11px;color:#000">150</div>
<div class="t" style="left:160px;width:60px;text-align:center;top:947px;font-size:11px;color:#000">0.04</div>
<div class="t" style="left:281px;width:60px;text-align:center;top:947px;font-size:11px;color:#000">0.08</div>
<div class="t" style="left:401px;width:60px;text-align:center;top:947px;font-size:11px;color:#000">0.12</div>
<div class="t" style="left:522px;width:60px;text-align:center;top:947px;font-size:11px;color:#000">0.16</div>
<div class="t" style="left:642px;width:60px;text-align:center;top:947px;font-size:11px;color:#000">0.2</div>
<div class="t" style="left:763px;width:60px;text-align:center;top:947px;font-size:11px;color:#000">0.24</div>
<div class="t" style="left:883px;width:60px;text-align:center;top:947px;font-size:11px;color:#000">0.28</div>
<div class="t" style="left:1004px;width:60px;text-align:center;top:947px;font-size:11px;color:#000">0.32</div>
<div class="t" style="left:1124px;width:60px;text-align:center;top:947px;font-size:11px;color:#000">0.36</div>
<div class="t" style="left:1245px;width:60px;text-align:center;top:947px;font-size:11px;color:#000">0.4</div>
<div class="t" style="left:593px;top:258px;font-size:13.5px;color:#111;font-weight:normal;">Stress-StrainCurve</div>
<div class="t" style="left:646px;top:963px;font-size:13.3px;color:#111;font-weight:normal;">Strain(%)</div>
<div class="t" style="left:-16px;top:602px;width:100px;height:14px;line-height:14px;text-align:center;font-size:13px;color:#111;transform:rotate(-90deg)">Stress(MPa)</div>
<div class="t" style="left:271px;top:849px;font-size:12px;color:#0000ff;font-weight:normal;">P1</div>
<div class="t" style="left:467px;top:759px;font-size:12px;color:#0000ff;font-weight:normal;">P2</div>
<div class="t" style="left:1070px;top:480px;font-size:12px;color:#0000ff;font-weight:normal;">Rm</div>
<div class="a" style="left:1318px;top:217px;width:4px;height:779px;background:#d8d8d8;border-left:1px solid #c8c8c8;border-right:1px solid #c8c8c8"></div>
<div class="a" style="left:1326px;top:220px;width:320px;height:119px;border:1px solid #a6a6a6;background:#fff"></div>
<div class="a" style="left:1326px;top:338px;width:320px;height:5px;background:#d6d6d6"></div>
<div class="a" style="left:1326px;top:342px;width:320px;height:627px;border:1px solid #a6a6a6;background:#fff"></div>
<svg style="left:1333px;top:226px" width="17" height="14">
<circle cx="8" cy="4.6" r="3.4" fill="#4aa2ec"/><ellipse cx="4.4" cy="9.6" rx="3.9" ry="3.1" fill="#4aa2ec"/><ellipse cx="11.6" cy="9.6" rx="3.9" ry="3.1" fill="#4aa2ec"/>
<path d="M5.5 7.2 Q8 6.2 10.5 7.2 M2 10.3 H6.5 M9.5 10.3 H14 M8 9 V12.5" stroke="#fff" stroke-width="0.9" fill="none"/></svg>
<div class="t" style="left:1354px;top:228px;font-size:11.6px;color:#111;font-weight:normal;">Sample number</div>
<div class="a" style="left:1337px;top:255px;width:13px;height:1px;background-image:linear-gradient(90deg,#777 50%,transparent 50%);background-size:2px 1px"></div>
<svg style="left:1350px;top:245px" width="17" height="18">
<path d="M7 1 H16 L12.5 5.5 L16 10 H7 L10.5 5.5 Z" fill="#5ab0f2"/>
<path d="M4 3.5 H13 L9.5 8 L13 12.5 H4 L7.5 8 Z" fill="#4aa4ee" stroke="#fff" stroke-width="0.5"/>
<path d="M1 6 H10.5 L7 10.5 L10.5 16.5 H1 L4.5 10.5 Z" fill="#3a96e6" stroke="#fff" stroke-width="0.5"/>
<path d="M2 7 L9 15.5" stroke="#fff" stroke-width="0.7"/></svg>
<div class="t" style="left:1371px;top:249px;font-size:11.6px;color:#111;font-weight:normal;">2025061805</div>
<div class="a" style="left:1358px;top:263px;width:1px;height:10px;background-image:linear-gradient(#777 50%,transparent 50%);background-size:1px 2px"></div>
<div class="a" style="left:1358px;top:273px;width:14px;height:1px;background-image:linear-gradient(90deg,#777 50%,transparent 50%);background-size:2px 1px"></div>
<svg style="left:1375px;top:265px" width="9" height="14"><path d="M0 0 H8.5 V1.5 L5.2 7 L8.5 12.5 V14 H0 V12.5 L3.3 7 L0 1.5 Z" fill="#3a98ea"/><path d="M1 1.2 H7.5 L5 5 Z" fill="#8ccaf6"/><path d="M1.2 1.5 L7.5 12.5" stroke="#fff" stroke-width="0.6"/></svg>
<div class="a" style="left:1390px;top:263px;width:16px;height:18px;background:#62b4ec;border:1px solid #3e9ce0"></div>
<div class="t" style="left:1391px;top:265px;font-size:11.6px;color:#111;font-weight:normal;">01</div>
<div class="a" style="left:1328px;top:344px;width:14px;height:441px;background:#cfd5ea"></div>
<svg style="left:1330px;top:349px" width="10" height="10"><rect x="0.5" y="0.5" width="9" height="8.5" rx="1.5" fill="#f4f4f4" stroke="#888"/><path d="M2.5 5 H7.5" stroke="#333"/></svg>
<div class="t" style="left:1345px;top:348px;font-size:11.6px;color:#111;font-weight:normal;">Pre-test para</div>
<svg style="left:1623px;top:345px" width="18" height="17" fill="none" stroke="#4a84d0" stroke-width="1.1"><path d="M1.6 15.3 V2.5 H5.2 L7 4.4 H16.3 V15.3 Z"/><path d="M2.5 0.9 H5 M8 1 H11 L12.2 2.2" stroke-width="1"/><rect x="3.6" y="5.6" width="2.6" height="2.6"/><rect x="3.6" y="10.7" width="2.6" height="2.6"/><path d="M8 7.5 H14.8 M8 12.5 H14.8" stroke="#0a2a9a" stroke-width="1.2"/></svg>
<div class="a" style="left:1342px;top:363px;width:302px;height:2px;background:#e0d8cc"></div>
<div class="a" style="left:1342px;top:385px;width:302px;height:1px;background:#e6ddd0"></div>
<div class="a" style="left:1508px;top:364px;width:1px;height:21px;background:#e6ddd0"></div>
<div class="t" style="left:1345px;top:370px;font-size:11.5px;color:#111;font-weight:normal;">SampleNo</div>
<div class="t" style="left:1512px;top:370px;font-size:11.5px;color:#111;font-weight:normal;">2025061805</div>
<div class="a" style="left:1342px;top:406px;width:302px;height:1px;background:#e6ddd0"></div>
<div class="a" style="left:1508px;top:385px;width:1px;height:21px;background:#e6ddd0"></div>
<div class="t" style="left:1345px;top:391px;font-size:11.5px;color:#111;font-weight:normal;">SerialNo</div>
<div class="t" style="left:1512px;top:391px;font-size:11.5px;color:#111;font-weight:normal;">01</div>
<div class="a" style="left:1342px;top:427px;width:302px;height:1px;background:#e6ddd0"></div>
<div class="a" style="left:1508px;top:406px;width:1px;height:21px;background:#e6ddd0"></div>
<div class="t" style="left:1345px;top:412px;font-size:11.5px;color:#111;font-weight:normal;">BatchNo</div>
<div class="t" style="left:1512px;top:412px;font-size:11.5px;color:#111;font-weight:normal;">2025-08-25</div>
<div class="a" style="left:1342px;top:448px;width:302px;height:1px;background:#e6ddd0"></div>
<div class="a" style="left:1508px;top:427px;width:1px;height:21px;background:#e6ddd0"></div>
<div class="t" style="left:1345px;top:433px;font-size:11.5px;color:#111;font-weight:normal;">TestDate</div>
<div class="t" style="left:1512px;top:433px;font-size:11.5px;color:#111;font-weight:normal;">Alan</div>
<div class="a" style="left:1342px;top:469px;width:302px;height:1px;background:#e6ddd0"></div>
<div class="a" style="left:1508px;top:448px;width:1px;height:21px;background:#e6ddd0"></div>
<div class="t" style="left:1345px;top:454px;font-size:11.5px;color:#111;font-weight:normal;">Shape</div>
<div class="t" style="left:1512px;top:454px;font-size:11.5px;color:#111;font-weight:normal;">Bar (diameter)</div>
<div class="a" style="left:1342px;top:490px;width:302px;height:1px;background:#e6ddd0"></div>
<div class="a" style="left:1508px;top:469px;width:1px;height:21px;background:#e6ddd0"></div>
<div class="t" style="left:1345px;top:475px;font-size:11.5px;color:#111;font-weight:normal;">Size(mm)</div>
<div class="t" style="left:1512px;top:475px;font-size:11.5px;color:#111;font-weight:normal;">10</div>
<div class="a" style="left:1342px;top:511px;width:302px;height:1px;background:#e6ddd0"></div>
<div class="a" style="left:1508px;top:490px;width:1px;height:21px;background:#e6ddd0"></div>
<div class="t" style="left:1345px;top:496px;font-size:11.5px;color:#111;font-weight:normal;">Area(mm^2)</div>
<div class="t" style="left:1512px;top:496px;font-size:11.5px;color:#111;font-weight:normal;">78.5</div>
<div class="a" style="left:1342px;top:532px;width:302px;height:1px;background:#e6ddd0"></div>
<div class="a" style="left:1508px;top:511px;width:1px;height:21px;background:#e6ddd0"></div>
<div class="t" style="left:1345px;top:517px;font-size:11.5px;color:#111;font-weight:normal;">Lo(mm)</div>
<div class="t" style="left:1512px;top:517px;font-size:11.5px;color:#111;font-weight:normal;">50</div>
<div class="a" style="left:1342px;top:553px;width:302px;height:1px;background:#e6ddd0"></div>
<div class="a" style="left:1508px;top:532px;width:1px;height:21px;background:#e6ddd0"></div>
<div class="t" style="left:1345px;top:538px;font-size:11.5px;color:#111;font-weight:normal;">Le(mm)</div>
<div class="t" style="left:1512px;top:538px;font-size:11.5px;color:#111;font-weight:normal;">50</div>
<div class="a" style="left:1342px;top:574px;width:302px;height:1px;background:#e6ddd0"></div>
<div class="a" style="left:1508px;top:553px;width:1px;height:21px;background:#e6ddd0"></div>
<div class="t" style="left:1345px;top:559px;font-size:11.5px;color:#111;font-weight:normal;">Lc(mm)</div>
<div class="t" style="left:1512px;top:559px;font-size:11.5px;color:#111;font-weight:normal;">100</div>
<svg style="left:1330px;top:580px" width="10" height="10"><rect x="0.5" y="0.5" width="9" height="8.5" rx="1.5" fill="#f4f4f4" stroke="#888"/><path d="M2.5 5 H7.5" stroke="#333"/></svg>
<div class="t" style="left:1345px;top:579px;font-size:11.6px;color:#111;font-weight:normal;">Post-test para</div>
<div class="a" style="left:1342px;top:594px;width:302px;height:2px;background:#e0d8cc"></div>
<div class="a" style="left:1342px;top:616px;width:302px;height:1px;background:#e6ddd0"></div>
<div class="a" style="left:1508px;top:595px;width:1px;height:21px;background:#e6ddd0"></div>
<div class="t" style="left:1345px;top:601px;font-size:11.5px;color:#111;font-weight:normal;">Lu(mm)</div>
<div class="t" style="left:1512px;top:601px;font-size:11.5px;color:#111;font-weight:normal;">53</div>
<div class="a" style="left:1342px;top:637px;width:302px;height:1px;background:#e6ddd0"></div>
<div class="a" style="left:1508px;top:616px;width:1px;height:21px;background:#e6ddd0"></div>
<div class="t" style="left:1345px;top:622px;font-size:11.5px;color:#111;font-weight:normal;">A(%)</div>
<div class="t" style="left:1512px;top:622px;font-size:11.5px;color:#111;font-weight:normal;">6.0</div>
<div class="a" style="left:1342px;top:658px;width:302px;height:1px;background:#e6ddd0"></div>
<div class="a" style="left:1508px;top:637px;width:1px;height:21px;background:#e6ddd0"></div>
<div class="t" style="left:1345px;top:643px;font-size:11.5px;color:#111;font-weight:normal;">Fm(kN)</div>
<div class="t" style="left:1512px;top:643px;font-size:11.5px;color:#111;font-weight:normal;">8.34</div>
<div class="a" style="left:1342px;top:679px;width:302px;height:1px;background:#e6ddd0"></div>
<div class="a" style="left:1508px;top:658px;width:1px;height:21px;background:#e6ddd0"></div>
<div class="t" style="left:1345px;top:664px;font-size:11.5px;color:#111;font-weight:normal;">Rm(Mpa)</div>
<div class="t" style="left:1512px;top:664px;font-size:11.5px;color:#111;font-weight:normal;">106.24</div>
<div class="a" style="left:1342px;top:700px;width:302px;height:1px;background:#e6ddd0"></div>
<div class="a" style="left:1508px;top:679px;width:1px;height:21px;background:#e6ddd0"></div>
<div class="t" style="left:1345px;top:685px;font-size:11.5px;color:#111;font-weight:normal;">FeH(kN)</div>
<div class="t" style="left:1512px;top:685px;font-size:11.5px;color:#111;font-weight:normal;">0.00</div>
<div class="a" style="left:1342px;top:721px;width:302px;height:1px;background:#e6ddd0"></div>
<div class="a" style="left:1508px;top:700px;width:1px;height:21px;background:#e6ddd0"></div>
<div class="t" style="left:1345px;top:706px;font-size:11.5px;color:#111;font-weight:normal;">ReH(Mpa)</div>
<div class="t" style="left:1512px;top:706px;font-size:11.5px;color:#111;font-weight:normal;">0</div>
<div class="a" style="left:1342px;top:742px;width:302px;height:1px;background:#e6ddd0"></div>
<div class="a" style="left:1508px;top:721px;width:1px;height:21px;background:#e6ddd0"></div>
<div class="t" style="left:1345px;top:727px;font-size:11.5px;color:#111;font-weight:normal;">FeL(kN)</div>
<div class="t" style="left:1512px;top:727px;font-size:11.5px;color:#111;font-weight:normal;">0.00</div>
<div class="a" style="left:1342px;top:763px;width:302px;height:1px;background:#e6ddd0"></div>
<div class="a" style="left:1508px;top:742px;width:1px;height:21px;background:#e6ddd0"></div>
<div class="t" style="left:1345px;top:748px;font-size:11.5px;color:#111;font-weight:normal;">ReL(Mpa)</div>
<div class="t" style="left:1512px;top:748px;font-size:11.5px;color:#111;font-weight:normal;">0</div>
<div class="a" style="left:1342px;top:784px;width:302px;height:1px;background:#e6ddd0"></div>
<div class="a" style="left:1508px;top:763px;width:1px;height:21px;background:#e6ddd0"></div>
<div class="t" style="left:1345px;top:769px;font-size:11.5px;color:#111;font-weight:normal;">Rp(Mpa)</div>
<div class="t" style="left:1512px;top:769px;font-size:11.5px;color:#111;font-weight:normal;">0</div>
<div class="a" style="left:1328px;top:969px;width:50px;height:21px;border:1px solid #a6a6a6;border-top:none;border-radius:0 0 3px 3px;background:linear-gradient(#f4f4f4,#fafafa)"></div>
<div class="t" style="left:1338px;top:973px;font-size:11.8px;color:#111;font-weight:normal;">Setup</div>
<div class="a" style="left:1378px;top:967px;width:49px;height:25px;border:1px solid #a6a6a6;border-top:none;border-radius:0 0 3px 3px;background:#fff"></div>
<div class="a" style="left:1379px;top:988px;width:47px;height:3px;background:#f0a018;border-radius:0 0 2px 2px"></div>
<div class="t" style="left:1389px;top:973px;font-size:11.6px;color:#000;font-weight:bold;">Data</div>
<div class="a" style="left:1649px;top:217px;width:251px;height:780px;border-left:1px solid #a6a6a6"></div>
<div class="a" style="left:1652px;top:244px;width:245px;height:688px;border:1px solid #a6a6a6;background:#fff"></div>
<div class="a" style="left:1655px;top:222px;width:48px;height:22px;border:1px solid #a6a6a6;border-bottom:none;border-radius:3px 3px 0 0;background:linear-gradient(#fbfbfb,#e9e9e9)"></div>
<div class="t" style="left:1655px;width:48px;text-align:center;top:227px;font-size:11.6px;color:#111">Displ.</div>
<div class="a" style="left:1704px;top:222px;width:45px;height:22px;border:1px solid #a6a6a6;border-bottom:none;border-radius:3px 3px 0 0;background:linear-gradient(#fbfbfb,#e9e9e9)"></div>
<div class="t" style="left:1704px;width:45px;text-align:center;top:227px;font-size:11.6px;color:#111">Load</div>
<div class="a" style="left:1750px;top:222px;width:66px;height:22px;border:1px solid #a6a6a6;border-bottom:none;border-radius:3px 3px 0 0;background:linear-gradient(#fbfbfb,#e9e9e9)"></div>
<div class="t" style="left:1750px;width:66px;text-align:center;top:227px;font-size:11.6px;color:#111">Program</div>
<div class="a" style="left:1816px;top:220px;width:65px;height:26px;border:1px solid #a6a6a6;border-bottom:none;border-radius:3px 3px 0 0;background:#fff"></div>
<div class="a" style="left:1817px;top:220px;width:63px;height:4px;background:#f39c12;border-radius:3px 3px 0 0"></div>
<div class="t" style="left:1816px;width:65px;text-align:center;top:226px;font-size:11.3px;font-weight:bold;color:#000">Tension</div>
<div class="a" style="left:1656px;top:248px;width:117px;height:28px;border:1px solid #a8a8a8;border-radius:3px;background:linear-gradient(#fdfdfd,#f1f1f1 60%,#dedede)"></div>
<svg style="left:1656px;top:250px" width="26" height="22"><defs><linearGradient id="pc" x1="0" y1="0" x2="1" y2="1"><stop offset="0" stop-color="#1a9af0"/><stop offset="0.5" stop-color="#0a4fc8"/><stop offset="1" stop-color="#0630a0"/></linearGradient></defs><path d="M11.8 7.2 L18.8 11.6 L6 18.8 Z" fill="#f6f29a" stroke="#a8a018" stroke-width="0.8" stroke-dasharray="1 0.6"/><path d="M6 18.8 L8.6 14 L11.8 16.2 Z" fill="#3a3a3a"/><path d="M12 5.8 L13.6 4.2 H22 V8.6 L19.6 11.2 H15.2 L12 7.4 Z" fill="url(#pc)"/></svg>
<div class="t" style="left:1715px;top:256px;font-size:12px;color:#111;font-weight:normal;">Edit</div>
<div class="a" style="left:1775px;top:248px;width:118px;height:28px;border:1px solid #b0b094;border-radius:3px;background:#f1f1ec"></div>
<div class="t" style="left:1810px;top:256px;font-size:11.6px;color:#888;font-weight:normal;">Next step</div>
<div class="a" style="left:1655px;top:277px;width:239px;height:652px;border:1px solid #a6a6a6;background:#fff"></div>
<div class="a" style="left:1657px;top:279px;width:235px;height:18px;background:#ececec"></div>
<div class="a" style="left:1657px;top:279px;width:81px;height:18px;border:1px solid #2a78d8;background:#f2f2f2"></div>
<div class="a" style="left:1659px;top:279px;width:232px;height:630px;overflow:hidden">
<div class="t" style="left:0;top:4px;font-size:11.3px;color:#111">1.Elastic phase</div>
<div class="t" style="left:0;top:22px;font-size:11.3px;color:#111">Strain Speed: 0.00025/s [Displacement Speed: 0.0125 mm/s]</div>
<div class="t" style="left:0;top:40px;font-size:11.3px;color:#111">Stress Reach 250.0 MPa Then the slope change</div>
<div class="t" style="left:0;top:58px;font-size:11.3px;color:#111"></div>
<div class="t" style="left:0;top:76px;font-size:11.3px;color:#111">2.Yield stage</div>
<div class="t" style="left:0;top:94px;font-size:11.3px;color:#111">Strain Speed: 0.00025 /s [Displacement Speed: 0.0125]</div>
<div class="t" style="left:0;top:112px;font-size:11.3px;color:#111">Stress Add 15.0 % Enter the separation stage.</div>
<div class="t" style="left:0;top:130px;font-size:11.3px;color:#111">Displacement Add 5.0 mm Enter the separation stage</div>
<div class="t" style="left:0;top:148px;font-size:11.3px;color:#111"></div>
<div class="t" style="left:0;top:166px;font-size:11.3px;color:#111">3.Strengthening stage</div>
<div class="t" style="left:0;top:184px;font-size:11.3px;color:#111">Strain Speed: 0.002 /s [Displacement Speed: 1.0]</div>
</div>
<div class="a" style="left:1657px;top:910px;width:235px;height:17px;background:#f0f0f0"></div>
<div class="a" style="left:1674px;top:917px;width:132px;height:3px;background:#858585;border-radius:2px"></div>
<div class="a" style="left:1653px;top:935px;width:58px;height:28px;border:1px solid #b0b0b0;border-radius:3px;background:linear-gradient(#fafafa,#ededed 60%,#d8d8d8)"></div>
<div class="a" style="left:1653px;top:965px;width:58px;height:28px;border:1px solid #b0b0b0;border-radius:3px;background:linear-gradient(#fafafa,#ededed 60%,#d8d8d8)"></div>
<div class="a" style="left:1713px;top:935px;width:57px;height:58px;border:1px solid #b0b0b0;border-radius:3px;background:linear-gradient(#fafafa,#ededed 60%,#d8d8d8)"></div>
<div class="a" style="left:1773px;top:935px;width:58px;height:58px;border:1px solid #6ec0ea;border-radius:3px;background:#6ec0ea"></div>
<div class="a" style="left:1833px;top:935px;width:58px;height:58px;border:1px solid #b0b0b0;border-radius:3px;background:linear-gradient(#fafafa,#ededed 60%,#d8d8d8)"></div>
<svg style="left:1657px;top:941px" width="20" height="16"><path d="M8.5 1 L17 9 H12 V15 H5 V9 H0 Z" fill="#3a98ea"/></svg>
<div class="t" style="left:1683px;top:943px;font-size:12px;color:#111;font-weight:normal;">Up</div>
<svg style="left:1657px;top:972px" width="20" height="16"><path d="M8.5 15 L17 7 H12 V1 H5 V7 H0 Z" fill="#3a98ea"/></svg>
<div class="t" style="left:1675px;top:973px;font-size:12px;color:#111;font-weight:normal;">Down</div>
<svg style="left:1733px;top:939px" width="18" height="32"><path d="M1 0 L16 15.5 L1 31 Z" fill="#3a98ea"/></svg>
<div class="t" style="left:1731px;top:975px;font-size:12px;color:#111;font-weight:normal;">Test</div>
<div class="a" style="left:1790px;top:943px;width:24px;height:24px;background:#e8403e;border:1px solid #c83030"></div>
<div class="t" style="left:1790px;top:975px;font-size:12px;color:#111;font-weight:normal;">Stop</div>
<svg style="left:0;top:0" width="1906" height="1025"><rect x="1849.5" y="944.5" width="7" height="20.5" fill="#3aa0f0" stroke="#0a64c8" stroke-width="1"/><path d="M1850 948.3 H1853.8 M1850 951.4 H1852.2 M1850 954.5 H1854.5 M1850 957.4 H1852.2 M1850 960.3 H1853.8" stroke="#0a58b8" stroke-width="0.9"/><path d="M1857.5 954.5 L1865.5 946.8 V962.5 Z M1865.8 954.5 L1874 946.8 V962.5 Z" fill="#3aa0f0" stroke="#2a86e0" stroke-width="0.6"/></svg>
<div class="t" style="left:1846px;top:975px;font-size:12px;color:#111;font-weight:normal;">Reset</div>
<div class="a" style="left:1px;top:1002px;width:1904px;height:21px;background:linear-gradient(#c4c4c4,#e6e6e6 40%,#f6f6f6);border-radius:0 0 6px 6px"></div>
<div class="a" style="left:1081px;top:1004px;width:1px;height:18px;background:#a8a8a8"></div>
<div class="a" style="left:1261px;top:1004px;width:1px;height:18px;background:#a8a8a8"></div>
<div class="a" style="left:1485px;top:1004px;width:1px;height:18px;background:#a8a8a8"></div>
<div class="a" style="left:1685px;top:1004px;width:1px;height:18px;background:#a8a8a8"></div>
<div class="a" style="left:1845px;top:1004px;width:1px;height:18px;background:#a8a8a8"></div>
<div class="t" style="left:1085px;top:1008px;font-size:11.5px;color:#111;font-weight:normal;">LoadMaxRange:[50000N]</div>
<div class="a" style="left:1265px;top:1004px;width:219px;height:18px;overflow:hidden"><div class="t" style="left:0;top:4px;font-size:11.5px;color:#111">ExtensionMaxRange:[10mm], Gauge:[50mm]</div></div>
<div class="t" style="left:1489px;top:1008px;font-size:11.5px;color:#111;font-weight:normal;">Up:20 Down:20</div>
<div class="t" style="left:1689px;top:1008px;font-size:11.5px;color:#111;font-weight:normal;">2025/8/26 9:38:36</div>
<div class="t" style="left:1849px;top:1008px;font-size:11px;color:#111;font-weight:normal;">V1.2.4</div>
</body></html>
